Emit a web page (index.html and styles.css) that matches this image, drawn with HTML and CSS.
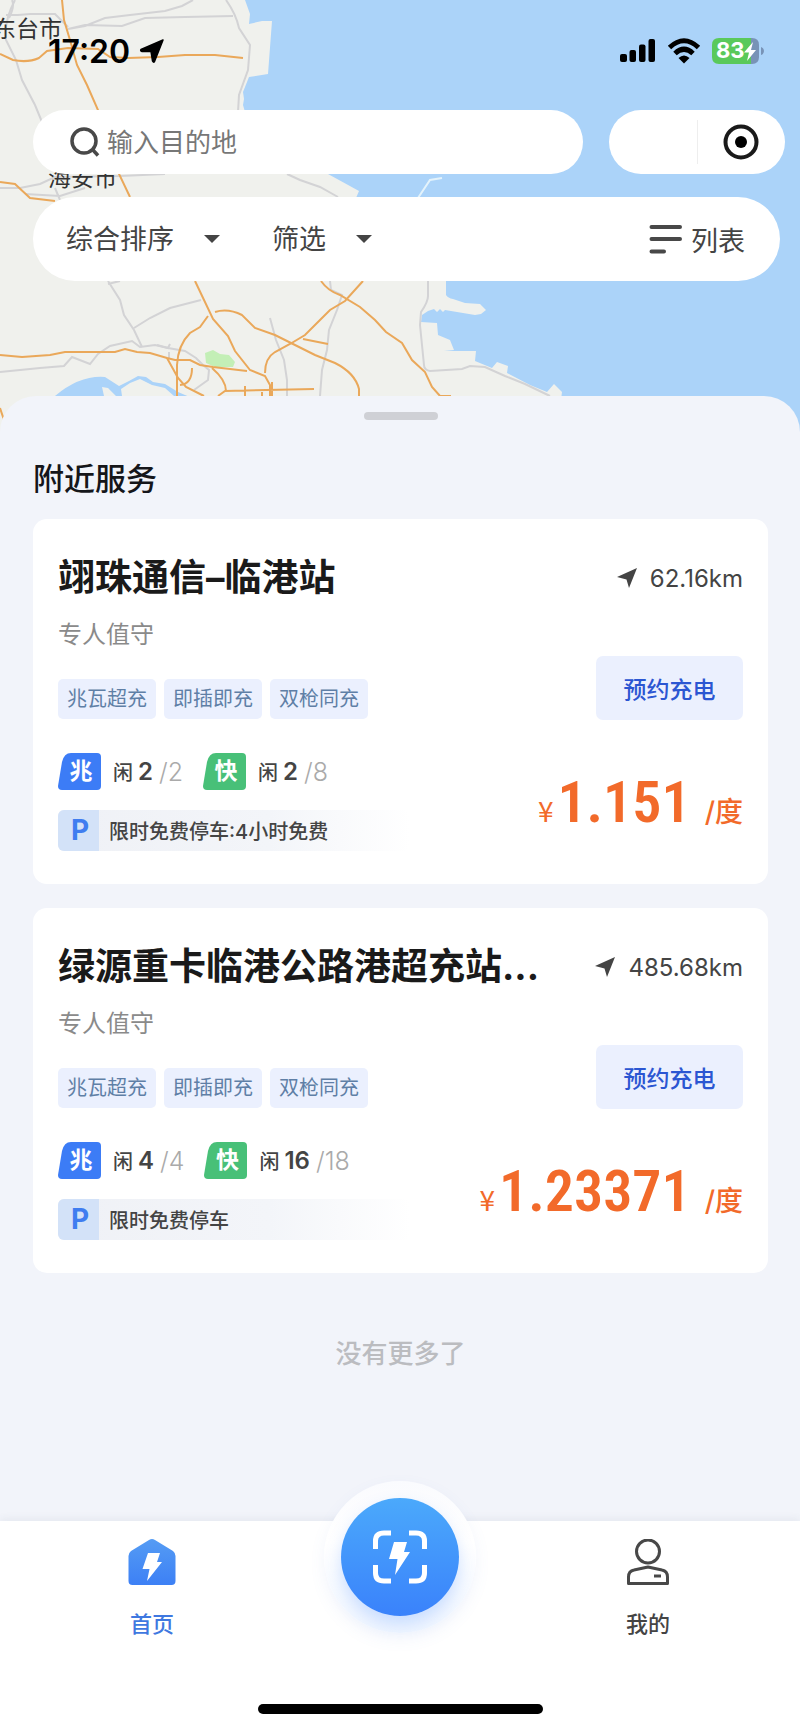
FILE: index.html
```html
<!DOCTYPE html>
<html lang="zh-CN">
<head>
<meta charset="utf-8">
<meta name="viewport" content="width=device-width, initial-scale=1">
<title>附近服务</title>
<link rel="stylesheet" href="styles.css">
</head>
<body>
<div class="app">
  <header class="top">
    <svg class="map" viewBox="0 0 800 440" preserveAspectRatio="xMinYMin slice" aria-hidden="true">
      <rect width="800" height="440" fill="#abd3f9"/>
      <path fill="#f0f1ed" d="M0 0H245L250 14 249 24 262 21 272 21 268 74 249 77 243 92 244 99 243 105 245 112 280 150 328 174 359 191 356 198 446 250V295Q448 298 453 299L465 303 480 304 486 310 481 314 475 315 445 310 443 312 440 309 437 312 434 309 428 311 422 315 421 322 437 323 438 335 450 340 454 350 444 351 476 351 475 361 492 368 497 362 508 366 507 373 530 385 547 392 554 384 562 392 561 400V440H0Z"/>
      <path fill="#abd3f9" d="M55 396Q80 375 105 377L119 386 129 381 138 376 146 377 153 382 165 384 178 392 192 398H118L108 388 102 387 104 396 110 400H50Z"/>
      <path fill="#f0f1ed" d="M122 396L121 389 130 383 140 379 152 385 165 388 174 396Z"/>
      <path fill="#c3efb6" d="M205 353L213 350 220 354 229 355 235 362 233 367H215L206 363Z"/>
      <g fill="none" stroke="#d3d3d5" stroke-width="2">
        <path d="M15 0Q4 20 6 40L16 60 22 80 35 105 42 122"/>
        <path d="M9 18Q15 6 12 0M6 15H18L30 14H55L68 27"/>
        <path d="M68 29L85 26 105 18 130 15 165 11 182 6 193 0M68 29L85 25 122 26 145 18 185 17 233 16"/>
        <path d="M226 0Q236 14 239 28L250 45 248 70 239 95 238 112"/>
        <path d="M0 188H20L40 184 55 177 120 176 165 174M25 194L60 196 85 188M55 188L60 200M287 174L300 180 320 187 338 197"/>
        <path d="M108 281L120 300 124 315 134 330 142 347M108 284L120 281M134 328L150 318 170 308 201 300"/>
        <path d="M0 372L40 368 64 366 72 357 90 364 98 354 110 346 132 341 140 347 155 345 168 348 185 351 196 358 203 365 209 370 208 380 194 390"/>
        <path d="M270 318L276 340 284 360 287 380V396M330 281L331 290 342 295 337 310 329 330 327 350 322 370 320 396M169 352V359M157 345L168 348 170 344"/>
        <path d="M428 281V296Q428 302 421 312L420 325 424 365Q424 370 430 371L462 369 470 366 485 367 505 376 525 384 550 396"/>
      </g>
      <path fill="none" stroke="#e4f3fb" stroke-width="2" d="M418 198L430 180 442 178"/>
      <g fill="none" stroke="#eaa85a" stroke-width="2">
        <path d="M62 0L64 20 70 40 77 65 87 85 98 110 119 174 130 197"/>
        <path d="M0 54L13 60Q28 63 39 58L47 51 68 48 98 49 110 57 128 58 158 57 185 55 215 55 243 58"/>
        <path d="M0 182L15 184 30 198 55 201M195 281L213 319 228 336 235 351 250 370 265 376 270 385V400"/>
        <path d="M0 355L22 357 50 355 65 352 90 352 115 352 125 349 137 352 150 353 167 358 175 360H190L200 365 213 367 247 371"/>
        <path d="M177 396V365Q178 345 190 333L200 327 208 316M215 312Q228 308 242 315L255 328 275 335 295 345 315 355 335 363Q355 373 359 389V396"/>
        <path d="M265 373Q265 358 275 352L290 344 305 335 320 320 330 310 345 301 363 281M321 281Q328 291 340 295L360 307 375 320 386 332 402 343 412 360 425 372 432 387 440 396H451"/>
        <path d="M167 358L178 378 186 387 204 396M192 368Q192 384 180 385M212 368Q226 380 226 391M218 396L225 391 314 389M245 386V396M262 392V396M272 382V396M303 339L328 344M0 408L4 420"/>
      </g>
      <g class="map-label">
        <text x="-7" y="37">东台市</text>
        <text x="48" y="186">海安市</text>
      </g>
    </svg>

    <div class="status">
      <div class="clock">
        <span>17:20</span>
        <svg width="26" height="26" viewBox="0 0 26 26" aria-hidden="true"><path d="M24 2L2 11.500Q1 13 3 13.500H12L13.500 23Q14.500 25 15.500 23.500Z" fill="#000" stroke="#000" stroke-width="1.500" stroke-linejoin="round"/></svg>
      </div>
      <div class="signals">
        <svg width="36" height="24" viewBox="0 0 36 24" role="img" aria-label="信号"><rect y="15" width="7" height="8" rx="2"/><rect x="9.500" y="11" width="6.500" height="12" rx="2"/><rect x="19" y="5.500" width="6.500" height="17.500" rx="2"/><rect x="28.500" width="6.500" height="23" rx="2"/></svg>
        <svg width="34" height="26" viewBox="0 0 34 26" role="img" aria-label="无线网络"><path d="M2.500 9.500Q17-4 31.500 9.500M8 15.500Q17 7 26 15.500" fill="none" stroke="#000" stroke-width="5"/><path d="M11.500 20Q17 15 22.500 20L17 25.500Z"/></svg>
        <svg width="54" height="28" viewBox="0 0 54 28" role="img" aria-label="电量 83%"><path d="M7 1H39V27H7Q0 27 0 20V8Q0 1 7 1Z" fill="#5ac95b"/><path d="M39 1H40Q47 1 47 8V20Q47 27 40 27H39Z" fill="#7893b7"/><path d="M49 10Q52 11 52 14T49 18Z" fill="#7893b7"/><path d="M41 5L32 15.500H37L35 24 44 13H39Z" fill="#fff"/><text class="battery-text" x="4" y="21">83</text></svg>
      </div>
    </div>

    <div class="search-row">
      <label class="search">
        <svg width="30" height="30" viewBox="0 0 30 30" aria-hidden="true"><circle cx="14" cy="14" r="12" fill="none" stroke="#484848" stroke-width="3.500"/><path d="M22.500 22.500L28 28.500" stroke="#484848" stroke-width="3.500"/></svg>
        <input type="text" placeholder="输入目的地" aria-label="目的地">
      </label>
      <div class="capsule">
        <button type="button" class="capsule-menu" aria-label="更多"></button>
        <button type="button" class="capsule-close" aria-label="关闭">
          <svg width="36" height="36" viewBox="0 0 36 36" aria-hidden="true"><circle cx="18" cy="18" r="15.500" fill="none" stroke="#1a1a1a" stroke-width="4"/><circle cx="18" cy="18" r="6"/></svg>
        </button>
      </div>
    </div>

    <div class="filters">
      <label class="drop">
        <select aria-label="排序"><option>综合排序</option></select>
        <svg width="16" height="8" viewBox="0 0 16 8" aria-hidden="true"><path d="M0 0H16L8 8Z" fill="#444"/></svg>
      </label>
      <label class="drop">
        <select aria-label="筛选条件"><option>筛选</option></select>
        <svg width="16" height="8" viewBox="0 0 16 8" aria-hidden="true"><path d="M0 0H16L8 8Z" fill="#444"/></svg>
      </label>
      <button type="button" class="list-toggle">
        <svg width="34" height="30" viewBox="0 0 34 30" aria-hidden="true"><path d="M2.500 3H31M2.500 15H31M2.500 27.500H15" stroke="#484848" stroke-width="4" stroke-linecap="round"/></svg>
        列表
      </button>
    </div>
  </header>

  <main class="sheet">
    <div class="handle"></div>
    <h1 class="heading">附近服务</h1>

    <article class="card">
      <div class="card-head">
        <h2 class="name">翊珠通信–临港站</h2>
        <span class="distance"><svg width="20" height="20" viewBox="0 0 20 20" aria-hidden="true"><path d="M20 0L0 9 9.500 11.500 12 20Z" fill="#444"/></svg>62.16km</span>
      </div>
      <div class="card-body">
        <div class="info">
          <p class="duty">专人值守</p>
          <ul class="tags"><li>兆瓦超充</li><li>即插即充</li><li>双枪同充</li></ul>
          <div class="guns">
            <span class="gun"><span class="badge"><svg class="badge-shape mega" viewBox="0 0 43 37" aria-hidden="true"><path d="M13 0H39Q43 0 43 4V33Q43 37 39 37H4Q0 37 0 33L4 9Q6 0 13 0Z"/></svg><span class="badge-text">兆</span></span><span class="idle">闲</span><b>2</b><span class="total">/2</span></span>
            <span class="gun"><span class="badge"><svg class="badge-shape fast" viewBox="0 0 43 37" aria-hidden="true"><path d="M13 0H39Q43 0 43 4V33Q43 37 39 37H4Q0 37 0 33L4 9Q6 0 13 0Z"/></svg><span class="badge-text">快</span></span><span class="idle">闲</span><b>2</b><span class="total">/8</span></span>
          </div>
          <div class="parking"><span class="p-mark">P</span><span class="p-text">限时免费停车:4小时免费</span></div>
        </div>
        <div class="action">
          <button type="button" class="book">预约充电</button>
          <p class="price"><span class="yen">¥</span><strong>1.151</strong><span class="unit">/度</span></p>
        </div>
      </div>
    </article>

    <article class="card">
      <div class="card-head">
        <h2 class="name">绿源重卡临港公路港超充站...</h2>
        <span class="distance"><svg width="20" height="20" viewBox="0 0 20 20" aria-hidden="true"><path d="M20 0L0 9 9.500 11.500 12 20Z" fill="#444"/></svg>485.68km</span>
      </div>
      <div class="card-body">
        <div class="info">
          <p class="duty">专人值守</p>
          <ul class="tags"><li>兆瓦超充</li><li>即插即充</li><li>双枪同充</li></ul>
          <div class="guns">
            <span class="gun"><span class="badge"><svg class="badge-shape mega" viewBox="0 0 43 37" aria-hidden="true"><path d="M13 0H39Q43 0 43 4V33Q43 37 39 37H4Q0 37 0 33L4 9Q6 0 13 0Z"/></svg><span class="badge-text">兆</span></span><span class="idle">闲</span><b>4</b><span class="total">/4</span></span>
            <span class="gun"><span class="badge"><svg class="badge-shape fast" viewBox="0 0 43 37" aria-hidden="true"><path d="M13 0H39Q43 0 43 4V33Q43 37 39 37H4Q0 37 0 33L4 9Q6 0 13 0Z"/></svg><span class="badge-text">快</span></span><span class="idle">闲</span><b>16</b><span class="total">/18</span></span>
          </div>
          <div class="parking"><span class="p-mark">P</span><span class="p-text">限时免费停车</span></div>
        </div>
        <div class="action">
          <button type="button" class="book">预约充电</button>
          <p class="price"><span class="yen">¥</span><strong>1.23371</strong><span class="unit">/度</span></p>
        </div>
      </div>
    </article>

    <p class="end">没有更多了</p>
  </main>

  <nav class="tabbar">
    <div class="tabs">
      <a class="tab active" href="#home">
        <svg width="48" height="46" viewBox="0 0 48 46" aria-hidden="true">
          <defs><linearGradient id="house" x1="0" y1="0" x2="0" y2="1"><stop offset="0" stop-color="#559cf4"/><stop offset="1" stop-color="#3d80f5"/></linearGradient></defs>
          <path d="M21 1Q24-1 27 1L45 12Q47.500 14 47.500 17V42Q47.500 46 43.500 46H4.500Q.5 46 .5 42V17Q.5 14 3 12Z" fill="url(#house)"/>
          <path d="M20 14H32L29 23H34L19 42 21.500 30H14.500Z" fill="#fff"/>
        </svg>
        首页
      </a>
      <a class="tab" href="#me">
        <svg width="44" height="46" viewBox="0 0 44 46" fill="none" stroke="#484848" stroke-width="3" aria-hidden="true"><circle cx="22" cy="12.500" r="11.500"/><path d="M2.500 44.500V38Q2.500 32 8 31L22 28 36 31Q41.500 32 41.500 38V44.500Z" stroke-linejoin="round"/><path d="M28 37H35"/></svg>
        我的
      </a>
    </div>
    <div class="home-indicator"></div>
    <div class="scan-ring">
      <button type="button" class="scan" aria-label="扫码充电">
        <svg width="54" height="54" viewBox="0 0 54 54" aria-hidden="true"><path d="M2.500 19V11Q2.500 3 11 3H18M36 3H43Q51.500 3 51.500 11V19M51.500 35V43Q51.500 51 43 51H36M18 51H11Q2.500 51 2.500 43V35" fill="none" stroke="#fff" stroke-width="5"/><path d="M21 12H34L31 22H37L22 45 24.500 29H16Z" fill="#fff"/></svg>
      </button>
    </div>
  </nav>
</div>
</body>
</html>
```

FILE: styles.css
```css
* {
  box-sizing: border-box;
}

body {
  margin: 0;
  background: #f2f4fa;
  color: #444;
  font-family: Inter, "Noto Sans CJK SC", sans-serif;
}

h1, h2, p, ul {
  margin: 0;
  padding: 0;
}

button, input, select {
  margin: 0;
  padding: 0;
  border: 0;
  background: none;
  color: inherit;
  font: inherit;
}

svg {
  display: block;
  flex: none;
}

.app {
  display: flex;
  flex-direction: column;
  min-height: 100vh;
}

/* map header */
.top {
  position: relative;
  padding: 33px 0 155px;
  background: #abd3f9;
}

.map {
  position: absolute;
  inset: 0;
  width: 100%;
  height: 100%;
}

.map-label {
  fill: #333;
  font-size: 23px;
}

.status,
.search-row,
.filters {
  position: relative;
}

.status {
  display: flex;
  align-items: center;
  justify-content: space-between;
  height: 36px;
  padding: 0 34px 0 48px;
}

.clock {
  display: flex;
  align-items: center;
  gap: 9px;
  color: #000;
  font-size: 32px;
  font-weight: 600;
}

.signals {
  display: flex;
  align-items: center;
  gap: 11px;
}

.battery-text {
  fill: #fff;
  font-size: 22px;
  font-weight: 700;
}

.search-row {
  display: flex;
  align-items: center;
  gap: 26px;
  margin: 41px 15px 0 33px;
}

.search {
  display: flex;
  flex: 1;
  align-items: center;
  gap: 7px;
  height: 64px;
  padding: 0 37px;
  border-radius: 32px;
  background: #fff;
}

.search input {
  flex: 1;
  min-width: 0;
  outline: 0;
  font-size: 26px;
}

.search input::placeholder {
  color: #777;
  opacity: 1;
}

.capsule {
  display: flex;
  align-items: center;
  width: 176px;
  height: 64px;
  border-radius: 32px;
  background: #fff;
}

.capsule-menu,
.capsule-close {
  display: flex;
  flex: 1;
  align-items: center;
  justify-content: center;
  height: 44px;
}

.capsule-close {
  border-left: 1px solid #eee;
}

.filters {
  display: flex;
  align-items: center;
  gap: 52px;
  height: 84px;
  margin: 23px 20px 0 33px;
  padding: 0 35px 0 33px;
  border-radius: 42px;
  background: #fff;
  font-size: 27px;
}

.drop {
  display: flex;
  align-items: center;
  gap: 30px;
}

.drop select {
  appearance: none;
}

.list-toggle {
  display: flex;
  align-items: center;
  gap: 8px;
  margin-left: auto;
}

/* bottom sheet */
.sheet {
  position: relative;
  flex: 1;
  margin-top: -40px;
  padding: 16px 32px 40px 33px;
  border-radius: 36px 36px 0 0;
  background: #f2f4fa;
}

.handle {
  width: 74px;
  height: 8px;
  margin: 0 auto;
  border-radius: 4px;
  background: #cfd0d5;
}

.heading {
  margin: 37px 0 18px;
  color: #15161a;
  font-size: 31px;
  font-weight: 500;
  line-height: 44px;
}

.card {
  padding: 35px 25px 33px;
  border-radius: 14px;
  background: #fff;
}

.card + .card {
  margin-top: 24px;
}

.card-head {
  display: flex;
  align-items: center;
  justify-content: space-between;
  gap: 20px;
}

.name {
  overflow: hidden;
  color: #1a1a1a;
  font-size: 37px;
  font-weight: 700;
  line-height: 48px;
  white-space: nowrap;
}

.distance {
  display: flex;
  align-items: center;
  gap: 13px;
  font-size: 24px;
}

.card-body {
  display: flex;
  justify-content: space-between;
}

.duty {
  margin-top: 17px;
  color: #8a8a8a;
  font-size: 24px;
  line-height: 32px;
}

.tags {
  display: flex;
  gap: 8px;
  margin-top: 28px;
  list-style: none;
}

.tags li {
  padding: 0 9px;
  border-radius: 5px;
  background: #ebf0fe;
  color: #5f7fa6;
  font-size: 20px;
  line-height: 40px;
}

.guns {
  display: flex;
  gap: 20px;
  margin-top: 34px;
}

.gun {
  display: flex;
  align-items: center;
  height: 37px;
  font-size: 24px;
}

.badge {
  display: grid;
  width: 43px;
  height: 37px;
  margin-right: 12px;
}

.badge-shape,
.badge-text {
  grid-area: 1 / 1;
}

.badge-text {
  padding-left: 3px;
  color: #fff;
  font-size: 23px;
  font-weight: 700;
  line-height: 37px;
  text-align: center;
}

.mega {
  fill: #3c7cf6;
}

.fast {
  fill: #48c078;
}

.idle {
  margin-right: 5px;
  font-size: 20px;
  font-weight: 500;
}

.gun b {
  margin-right: 6px;
  font-weight: 600;
}

.total {
  color: #aaa;
  font-size: 25px;
  font-weight: 300;
}

.parking {
  display: flex;
  align-items: center;
  width: 352px;
  height: 41px;
  margin-top: 20px;
  border-radius: 6px;
  overflow: hidden;
  background: linear-gradient(90deg, #eff1f6, #f3f5f9 60%, #fff);
}

.p-mark {
  width: 41px;
  margin-right: 10px;
  padding-left: 3px;
  background: #d3e2f8;
  color: #3f7df0;
  font-size: 28px;
  font-weight: 700;
  line-height: 41px;
  text-align: center;
}

.p-text {
  font-size: 20px;
  font-weight: 500;
}

.action {
  display: flex;
  flex-direction: column;
  align-items: flex-end;
  padding-top: 54px;
}

.book {
  width: 147px;
  height: 64px;
  border-radius: 7px;
  background: #ebf0fe;
  color: #2b56d2;
  font-size: 23px;
  font-weight: 500;
}

.price {
  display: flex;
  align-items: baseline;
  margin-top: 46px;
  color: #f26a2a;
  line-height: 72px;
}

.yen {
  margin-right: 4px;
  font-family: "Noto Sans CJK SC", sans-serif;
  font-size: 28px;
}

.price strong {
  font-family: "Roboto Condensed", "Liberation Sans Narrow", Roboto, sans-serif;
  font-size: 58px;
  font-weight: 600;
}

.unit {
  margin-left: 14px;
  font-size: 28px;
  font-weight: 500;
}

.end {
  margin-top: 63px;
  color: #bbbcc0;
  font-size: 26px;
  font-weight: 500;
  line-height: 36px;
  text-align: center;
}

/* tab bar */
.tabbar {
  position: relative;
  padding: 18px 0 17px;
  background: #fff;
  box-shadow: 0 -2px 8px rgba(60, 70, 100, 0.07);
}

.tabs {
  display: flex;
  justify-content: space-between;
}

.tab {
  display: flex;
  flex-direction: column;
  align-items: center;
  gap: 25px;
  width: 38%;
  color: #444;
  font-size: 22px;
  font-weight: 500;
  line-height: 28px;
  text-decoration: none;
}

.tab.active {
  color: #3f78e0;
}

.home-indicator {
  width: 285px;
  height: 10px;
  margin: 66px auto 0;
  border-radius: 5px;
  background: #000;
}

.scan-ring {
  position: absolute;
  top: -40px;
  left: 50%;
  display: grid;
  place-items: center;
  width: 152px;
  height: 152px;
  margin-left: -76px;
  border-radius: 50%;
  background: linear-gradient(#fafbfe, #fff 40%, #f0f6ff);
  box-shadow: 0 6px 16px rgba(90, 130, 220, 0.08);
}

.scan {
  display: grid;
  place-items: center;
  width: 118px;
  height: 118px;
  border-radius: 50%;
  background: linear-gradient(#4ba9fb, #3a82fb);
  box-shadow: 0 8px 16px rgba(70, 140, 255, 0.25);
}
```
